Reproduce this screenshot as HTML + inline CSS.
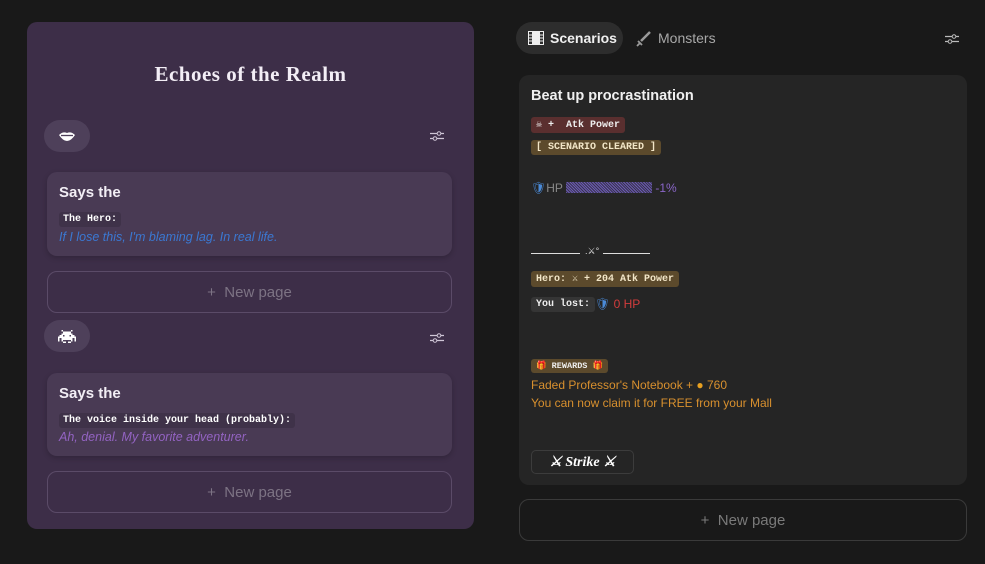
<!DOCTYPE html>
<html><head><meta charset="utf-8"><style>
*{box-sizing:border-box;margin:0;padding:0}
body{width:985px;height:564px;background:#191919;font-family:"Liberation Sans",sans-serif;position:relative;overflow:hidden}
.a{position:absolute}
.mono{font-family:"Liberation Mono",monospace;font-weight:bold}
.panel{left:27px;top:22px;width:447px;height:507px;background:#3d2e48;border-radius:10px}
.pill{width:46px;height:32px;background:#4e405a;border-radius:16px;display:flex;align-items:center;justify-content:center;color:#fff}
.card{left:47px;width:405px;background:#493a54;border-radius:10px;box-shadow:0 2px 6px rgba(0,0,0,.2)}
.says{position:absolute;left:12px;top:12px;color:#f2eef5;font-weight:bold;font-size:15px}
.code{position:absolute;left:12px;font-size:10px;color:#fff;background:#3f3249;padding:2px 4px;border-radius:3px}
.it{position:absolute;left:12px;font-style:italic;font-size:12.5px}
.btn{border:1px solid #5b4b68;border-radius:10px;height:42px;display:flex;align-items:center;justify-content:center;color:#7d7384;font-size:15px}
.btn2{border:1px solid #3a3a3a;color:#7a7a7a}
.badge{position:absolute;left:12px;font-size:10px;padding:2px 5px;border-radius:3px;color:#eee}
</style></head><body>
<div class="a panel"></div>
<div class="a" style="left:27px;width:447px;top:62px;text-align:center;color:#f3eef6;font-family:'Liberation Serif',serif;font-weight:bold;font-size:21px;letter-spacing:.5px">Echoes of the Realm</div>

<div class="a pill" style="left:44px;top:120px"><svg width="16" height="10" viewBox="0 0 16 10"><path d="M0 4 Q4 0 8 2 Q12 0 16 4 Q12 10 8 10 Q4 10 0 4Z" fill="#fff"/><path d="M2 4.5 H14" stroke="#4e405a" stroke-width="1.3"/></svg></div>
<svg class="a" style="left:430px;top:130px" width="14" height="12" viewBox="0 0 14 12"><path d="M0 3.5H14M0 8.5H14" stroke="#cfc6d6" stroke-width="1.2"/><circle cx="9" cy="3.5" r="1.8" fill="#3d2e48" stroke="#cfc6d6"/><circle cx="5" cy="8.5" r="1.8" fill="#3d2e48" stroke="#cfc6d6"/></svg>

<div class="a card" style="top:172px;height:84px">
<div class="says">Says the</div>
<div class="code mono" style="top:40px">The Hero:</div>
<div class="it" style="top:58px;color:#3b78d2">If I lose this, I'm blaming lag. In real life.</div>
</div>
<div class="a btn" style="left:47px;top:271px;width:405px">+&nbsp;&nbsp;New page</div>

<div class="a pill" style="left:44px;top:320px"><svg width="18" height="13" viewBox="0 0 11 8" shape-rendering="crispEdges"><path fill="#fff" d="M2 0h1v1h-1zM8 0h1v1h-1zM3 1h5v1h-5zM2 2h7v1h-7zM1 3h2v1h-2zM4 3h3v1h-3zM8 3h2v1h-2zM0 4h11v1h-11zM0 5h1v2h-1zM2 5h7v1h-7zM10 5h1v2h-1zM2 6h1v1h-1zM8 6h1v1h-1zM3 7h2v1h-2zM6 7h2v1h-2z"/></svg></div>
<svg class="a" style="left:430px;top:332px" width="14" height="12" viewBox="0 0 14 12"><path d="M0 3.5H14M0 8.5H14" stroke="#cfc6d6" stroke-width="1.2"/><circle cx="9" cy="3.5" r="1.8" fill="#3d2e48" stroke="#cfc6d6"/><circle cx="5" cy="8.5" r="1.8" fill="#3d2e48" stroke="#cfc6d6"/></svg>

<div class="a card" style="top:373px;height:83px">
<div class="says">Says the</div>
<div class="code mono" style="top:40px">The voice inside your head (probably):</div>
<div class="it" style="top:57px;color:#9363c2">Ah, denial. My favorite adventurer.</div>
</div>
<div class="a btn" style="left:47px;top:471px;width:405px">+&nbsp;&nbsp;New page</div>

<!-- right -->
<div class="a" style="left:516px;top:22px;width:107px;height:32px;background:#2d2d2d;border-radius:16px"></div>
<svg class="a" style="left:528px;top:31px" width="16" height="14" viewBox="0 0 16 14"><rect x="0.5" y="0.5" width="15" height="13" fill="none" stroke="#eee"/><path d="M4.5 0V14M11.5 0V14M0 7H4.5M11.5 7H16M0 4H4.5M0 10H4.5M11.5 4H16M11.5 10H16" stroke="#eee"/><rect x="5" y="1" width="6" height="12" fill="#eee"/></svg>
<div class="a" style="left:550px;top:30px;color:#f0f0f0;font-weight:bold;font-size:14px">Scenarios</div>
<svg class="a" style="left:636px;top:31px" width="16" height="16" viewBox="0 0 16 16"><path d="M14 1L5 10" stroke="#9a9a9a" stroke-width="2.5"/><path d="M2 10L6 14M1 15L4 12" stroke="#9a9a9a" stroke-width="1.8"/></svg>
<div class="a" style="left:658px;top:30px;color:#a8a8a8;font-size:14px">Monsters</div>
<svg class="a" style="left:945px;top:33px" width="14" height="12" viewBox="0 0 14 12"><path d="M0 3.5H14M0 8.5H14" stroke="#bbb" stroke-width="1.2"/><circle cx="9" cy="3.5" r="1.8" fill="#191919" stroke="#bbb"/><circle cx="5" cy="8.5" r="1.8" fill="#191919" stroke="#bbb"/></svg>

<div class="a" style="left:519px;top:75px;width:448px;height:410px;background:#252525;border-radius:10px">
<div class="a" style="left:12px;top:13px;color:#f0f0f0;font-weight:bold;font-size:14.5px">Beat up procrastination</div>
<div class="badge mono" style="top:42px;background:#5a2f2f">☠ +&nbsp; Atk Power</div>
<div class="badge mono" style="top:65px;background:#5c4a2c;color:#f2e6c8">[ SCENARIO CLEARED ]</div>
<div class="a" style="left:12px;top:106px;font-size:12px;color:#888"><span style="color:#4a8ad8">🛡</span>HP <span style="display:inline-block;width:86px;height:11px;vertical-align:-1px;background:repeating-linear-gradient(45deg,#6a5bb0 0 1px,#3a3350 1px 2px)"></span> <span style="color:#8a66c8">-1%</span></div>
<div class="a" style="left:12px;top:178px;width:49px;border-top:1px solid #ddd"></div>
<div class="a" style="left:66px;top:171px;font-size:9px;color:#ddd">.⚔°</div>
<div class="a" style="left:84px;top:178px;width:47px;border-top:1px solid #ddd"></div>
<div class="badge mono" style="top:196px;background:#5c4a2c;color:#f2e6c8">Hero: ⚔ + 204 Atk Power</div>
<div class="badge mono" style="top:222px;background:#353535">You lost:</div>
<div class="a" style="left:76px;top:222px;font-size:12px;color:#d23c3c"><span style="color:#4a8ad8">🛡</span> 0 HP</div>
<div class="badge mono" style="top:284px;background:#5c4a2c;font-size:8.5px">🎁 REWARDS 🎁</div>
<div class="a" style="left:12px;top:301px;font-size:12px;color:#d8902e;line-height:18px">Faded Professor's Notebook + <span style="color:#e8a020">●</span> 760<br>You can now claim it for FREE from your Mall</div>
<div class="a" style="left:12px;top:375px;width:103px;height:24px;border:1px solid #3c3c3c;border-radius:5px;color:#fff;font-family:'Liberation Serif',serif;font-weight:bold;font-style:italic;font-size:14px;display:flex;align-items:center;justify-content:center">⚔ Strike ⚔</div>
</div>
<div class="a btn btn2" style="left:519px;top:499px;width:448px">+&nbsp;&nbsp;New page</div>
</body></html>
